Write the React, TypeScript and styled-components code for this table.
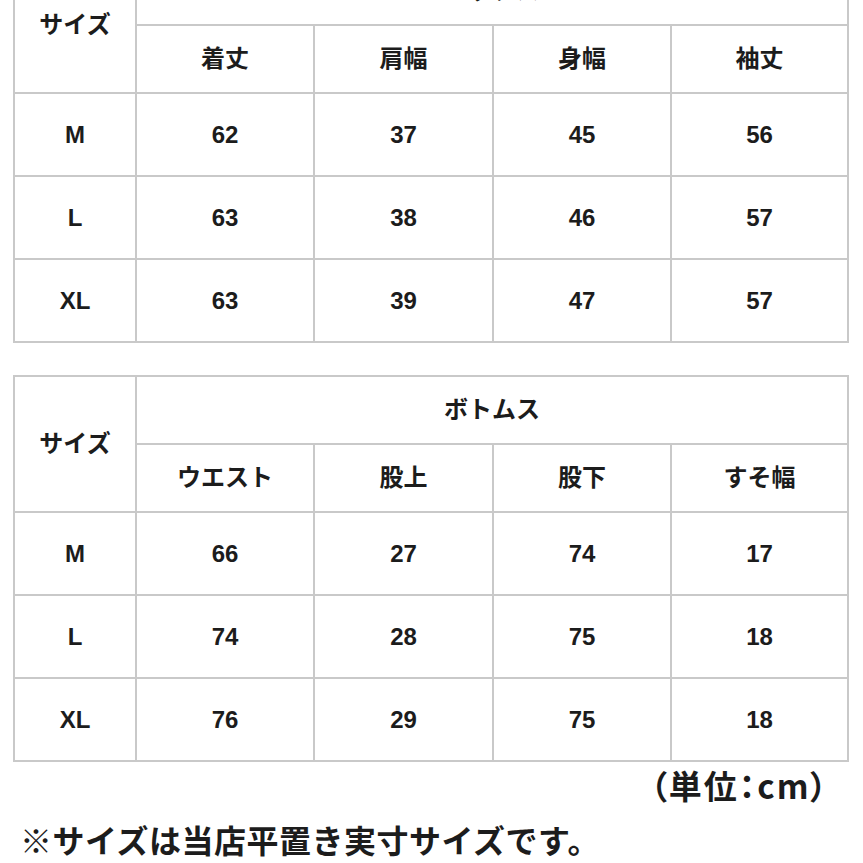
import React from "react";
import styled, { createGlobalStyle } from "styled-components";

const GlobalStyle = createGlobalStyle`
  html, body {
    margin: 0;
    padding: 0;
    background: #ffffff;
    overflow: hidden;
  }
  body {
    font-family: "Liberation Sans", "Noto Sans CJK JP", sans-serif;
    color: #1c1c1c;
  }
`;

const Page = styled.div`
  width: 863px;
  height: 863px;
  padding-left: 13px;
  box-sizing: border-box;
  display: flex;
  flex-direction: column;
  overflow: hidden;
`;

const SizeTable = styled.div<{ $first?: boolean }>`
  display: grid;
  grid-template-columns: 120px 176px 177px 176px 175px;
  grid-template-rows: 66px 66px 81px 81px 81px;
  gap: 2px;
  padding: 2px;
  width: max-content;
  background: #c9c9c9;
  margin-top: ${(p) => (p.$first ? "-44px" : "32px")};
`;

const Cell = styled.div<{ $colSpan?: number; $rowSpan?: number }>`
  background: #ffffff;
  display: flex;
  align-items: center;
  justify-content: center;
  font-size: 24px;
  font-weight: 700;
  line-height: 1;
  grid-column: ${(p) => (p.$colSpan ? `span ${p.$colSpan}` : "auto")};
  grid-row: ${(p) => (p.$rowSpan ? `span ${p.$rowSpan}` : "auto")};
`;

const UnitRow = styled.div`
  display: flex;
  justify-content: flex-end;
  width: 836px;
  padding-right: 20px;
  box-sizing: border-box;
  margin-top: 5px;
`;

const UnitLabel = styled.span`
  font-size: 33px;
  font-weight: 700;
  line-height: 36px;
  letter-spacing: 2px;
  font-family: "Noto Sans CJK JP", sans-serif;
  font-feature-settings: "palt";
`;

const Note = styled.div`
  font-family: "Noto Sans CJK JP", sans-serif;
  font-size: 32px;
  font-weight: 700;
  line-height: 40px;
  letter-spacing: 0.5px;
  margin-top: 16px;
  margin-left: 7px;
  white-space: nowrap;
`;

type TableData = {
  title: string;
  columns: string[];
  rows: { size: string; values: number[] }[];
};

const tops: TableData = {
  title: "トップス",
  columns: ["着丈", "肩幅", "身幅", "袖丈"],
  rows: [
    { size: "M", values: [62, 37, 45, 56] },
    { size: "L", values: [63, 38, 46, 57] },
    { size: "XL", values: [63, 39, 47, 57] },
  ],
};

const bottoms: TableData = {
  title: "ボトムス",
  columns: ["ウエスト", "股上", "股下", "すそ幅"],
  rows: [
    { size: "M", values: [66, 27, 74, 17] },
    { size: "L", values: [74, 28, 75, 18] },
    { size: "XL", values: [76, 29, 75, 18] },
  ],
};

const Table: React.FC<{ data: TableData; first?: boolean }> = ({ data, first }) => (
  <SizeTable $first={first}>
    <Cell $rowSpan={2}>サイズ</Cell>
    <Cell $colSpan={4}>{data.title}</Cell>
    {data.columns.map((c) => (
      <Cell key={c}>{c}</Cell>
    ))}
    {data.rows.map((r) => (
      <React.Fragment key={r.size}>
        <Cell>{r.size}</Cell>
        {r.values.map((v, i) => (
          <Cell key={i}>{v}</Cell>
        ))}
      </React.Fragment>
    ))}
  </SizeTable>
);

export default function App() {
  return (
    <>
      <GlobalStyle />
      <Page>
        <Table data={tops} first />
        <Table data={bottoms} />
        <UnitRow>
          <UnitLabel>（単位：cm）</UnitLabel>
        </UnitRow>
        <Note>※サイズは当店平置き実寸サイズです。</Note>
      </Page>
    </>
  );
}
